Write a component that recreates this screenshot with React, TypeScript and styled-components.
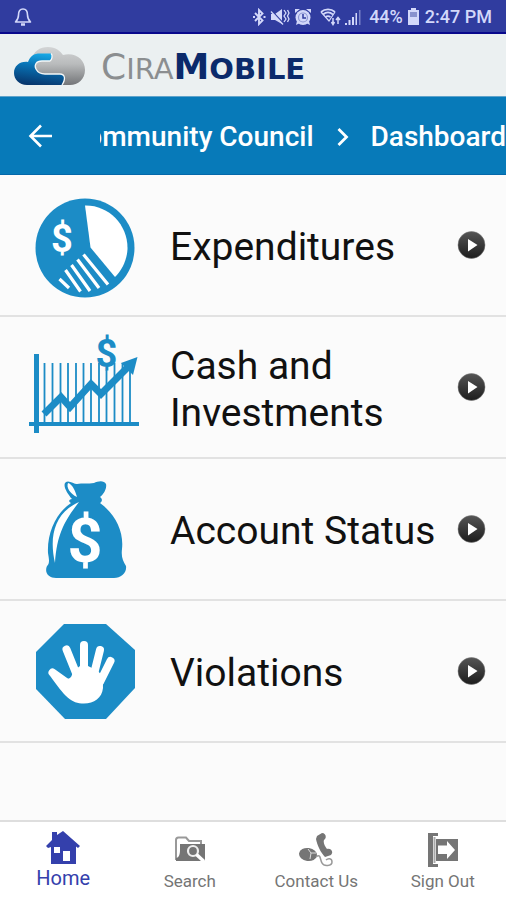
import React from "react";
import styled, { createGlobalStyle } from "styled-components";

const BLUE = "#1c8cc6";
const STATUS = "#d3d8fa";
const GREY = "#757575";

const GlobalStyle = createGlobalStyle`
  *, *::before, *::after { box-sizing: border-box; }
  html, body { margin: 0; padding: 0; }
  body { background: #fafafa; font-family: Roboto, "Liberation Sans", sans-serif; color: #111; }
  svg { display: block; flex: none; }
`;

const Screen = styled.div`
  display: flex;
  flex-direction: column;
  min-height: 100vh;
  overflow: hidden;
  background: #fbfbfb;
`;

const StatusBar = styled.div`
  display: flex;
  align-items: center;
  justify-content: space-between;
  height: 34px;
  padding: 2px 14px 0 14px;
  background: #303c9f;
  border-bottom: 2px solid #08088c;
  color: ${STATUS};
`;

const StatusGroup = styled.div`
  display: flex;
  align-items: center;
  gap: 4px;
  font-size: 18px;
  font-weight: 500;
  line-height: 24px;
  white-space: nowrap;
`;

const BrandBar = styled.header`
  display: flex;
  align-items: center;
  gap: 16px;
  height: 62px;
  padding: 2px 14px 0;
  background: #ebf0f1;
`;

const Wordmark = styled.div`
  padding-top: 4px;
  font-family: "DejaVu Sans", sans-serif;
  font-weight: 400;
  font-size: 36px;
  line-height: 40px;
  color: #8b8e90;
  white-space: nowrap;
`;

const WordmarkStrong = styled.span`
  font-weight: 700;
  color: #0b2a6b;
`;

const SmallCap = styled.span`
  font-size: 29px;
`;

const TitleBar = styled.nav`
  display: flex;
  align-items: center;
  height: 79px;
  border-top: 1px solid #5fa3cb;
  border-bottom: 1px solid #0468aa;
  background: #077ab9;
  color: #fff;
`;

const BackButton = styled.button`
  display: flex;
  align-items: center;
  padding: 0 0 0 28px;
  width: 100px;
  height: 100%;
  flex: none;
  border: 0;
  background: none;
  color: inherit;
  cursor: pointer;
`;

const Crumbs = styled.div`
  display: flex;
  flex: 1;
  min-width: 0;
  align-items: center;
  justify-content: flex-end;
  overflow: hidden;
  padding-top: 2px;
  gap: 22px;
`;

const Crumb = styled.a`
  flex: none;
  color: inherit;
  text-decoration: none;
  font-size: 28px;
  font-weight: 500;
  line-height: 36px;
  white-space: nowrap;
`;

const Menu = styled.main`
  display: flex;
  flex: 1;
  flex-direction: column;
`;

const MenuRow = styled.button`
  display: flex;
  align-items: center;
  min-height: 142px;
  width: 100%;
  padding: 0 19px 0 20px;
  border: 0;
  border-bottom: 2px solid #e2e2e2;
  background: #fbfbfb;
  color: #111;
  font-family: inherit;
  font-size: 39px;
  line-height: 47px;
  text-align: left;
  cursor: pointer;
`;

const RowLabel = styled.span`
  flex: 1;
  min-width: 0;
  padding-left: 20px;
  padding-top: 5px;
`;

const TabBar = styled.nav`
  display: grid;
  grid-template-columns: repeat(4, 1fr);
  height: 80px;
  border-top: 2px solid #dedede;
  background: #fff;
`;

const Tab = styled.a<{ $active?: boolean }>`
  display: flex;
  flex-direction: column;
  align-items: center;
  padding-top: ${(p) => (p.$active ? 9 : 11)}px;
  color: ${(p) => (p.$active ? "#3440ac" : GREY)};
  font-size: ${(p) => (p.$active ? 20 : 17)}px;
  line-height: 24px;
  gap: 2px;
  text-decoration: none;
  white-space: nowrap;
`;

const Bell = () => (
  <svg width="18" height="20" viewBox="0 0 18 20" fill="none" stroke={STATUS} strokeWidth="1.6" strokeLinejoin="round">
    <path d="M1.500 15 C3.500 13 4.500 11 4.500 8 C4.500 4 6 2 9 2 S13.500 4 13.500 8 C13.500 11 14.500 13 16.500 15 Z" />
    <path d="M7 17.500 H11" strokeWidth="2.500" />
  </svg>
);

const Bluetooth = () => (
  <svg width="14" height="18" viewBox="0 0 14 18" fill="none" stroke={STATUS} strokeWidth="1.900">
    <path d="M3 5 L10.500 12.500 L7 16 V2 L10.500 5.500 L3 13" />
    <path d="M1 9 H3 M11.500 9 H13.500" strokeWidth="2" />
  </svg>
);

const Muted = () => (
  <svg width="20" height="18" viewBox="0 0 20 18" fill={STATUS}>
    <path d="M1 6 H5 L12 1 V16 L5 12 H1 Z" />
    <path d="M1 2 L14 16" stroke="#303c9f" strokeWidth="1.500" />
    <path d="M1 3.500 L13 16.500" stroke={STATUS} strokeWidth="1.300" />
    <path d="M14 2 L16 5 L14 8 L16 11 L14 14 M17.500 2 L19 5 L17.500 8 L19 11 L17.500 14" stroke={STATUS} strokeWidth="1.300" fill="none" />
  </svg>
);

const Alarm = () => (
  <svg width="18" height="18" viewBox="0 0 18 18">
    <g fill={STATUS}>
      <circle cx="9" cy="9.500" r="7.500" />
      <path d="M1 5 V1 H6 Z M17 5 V1 H12 Z M2 17 L3 13 L6 15 Z M16 17 L15 13 L12 15 Z" />
    </g>
    <circle cx="9" cy="9.500" r="4.500" fill="none" stroke="#8e97d2" strokeWidth="1.200" />
    <path d="M9 6 V10 H12" fill="none" stroke="#303c9f" strokeWidth="1.500" />
  </svg>
);

const Wifi = () => (
  <svg width="25" height="18" viewBox="-5 0 25 18" fill="none" stroke={STATUS} strokeWidth="1.700">
    <path d="M0 4 C4 0.500 10 0.500 14 4 M2 6.500 C5 4 9 4 12 6.500 M4.500 9 C6 8 8 8 9.500 9" />
    <path d="M0 4 L8 13 L14 4" strokeWidth="1.200" />
    <path d="M12 10 V16 M10.500 14 L12 16.500 L13.500 14 M17 16 V9 M15 12 L17 9.500 L19 12" strokeWidth="1.500" />
  </svg>
);

const Signal = () => (
  <svg width="20" height="18" viewBox="0 0 20 18" fill={STATUS}>
    <path d="M0 15 H2 V17 H0 Z M3.500 12 H5.500 V17 H3.500 Z M7 9 H9 V17 H7 Z M10.500 5 H12 V17 H10.500 Z" />
    <path d="M14 2 H15.500 V17 H14 Z" opacity=".45" />
  </svg>
);

const Battery = () => (
  <svg width="14" height="18" viewBox="0 0 14 18">
    <path d="M4 0 H9 V2 H12 V17 H1 V2 H4 Z" fill={STATUS} />
    <path d="M3 4 H10 V9 H3 Z" fill="#8992ce" />
  </svg>
);

const CloudLogo = () => (
  <svg width="71" height="40" viewBox="0 0 71 40" role="img" aria-label="CiraMobile">
    <defs>
      <linearGradient id="silver" x1="0" y1="0" x2="0" y2="1">
        <stop offset="0" stopColor="#d2d4d5" />
        <stop offset=".45" stopColor="#b9bbbc" />
        <stop offset="1" stopColor="#737578" />
      </linearGradient>
      <linearGradient id="azure" x1=".6" y1="0" x2=".4" y2="1">
        <stop offset="0" stopColor="#18a9e6" />
        <stop offset=".4" stopColor="#0873b5" />
        <stop offset="1" stopColor="#07366d" />
      </linearGradient>
    </defs>
    <path d="M18 14 C19 5 26 1 34 1 C42 1 46 5 49 9 C62 6 71 14 71 24 C71 33 64 39 56 39 H26 C20 32 17 24 18 14 Z" fill="url(#silver)" />
    <path d="M37 7.500 C39 9 38 14 36 15 H28 C22 15 20 19 22 23 C24 27 28 28 31 28 H46 C51 28 52 33 48 39 H13 C5 39 0 33 0 27 C0 20 6 15 14 16 C16 10 20 7.500 26 7.500 Z" fill="url(#azure)" />
    <path d="M37 7.500 C39 9 38 14 36 15 H28 C22 15 20 19 22 23 C24 27 28 28 31 28 H46 C51 28 52 33 48 39" fill="none" stroke="#f4f7f8" strokeWidth="1.300" />
  </svg>
);

const BackArrow = () => (
  <svg width="25" height="24" viewBox="0 0 25 24" fill="none" stroke="#fff" strokeWidth="2.600">
    <path d="M13 1.500 L2.500 12 L13 22.500 M2.500 12 H24" />
  </svg>
);

const Chevron = () => (
  <svg width="13" height="20" viewBox="0 0 13 20" fill="none" stroke="#fff" strokeWidth="2.800">
    <path d="M2.500 2 L10.500 10 L2.500 18" />
  </svg>
);

const Dollar = styled.text`
  font-family: Roboto, sans-serif;
  font-weight: 700;
  text-anchor: middle;
`;

const PieIcon = () => (
  <svg width="130" height="130" viewBox="0 -5 130 130" aria-hidden="true">
    <circle cx="65" cy="63" r="49.500" fill={BLUE} />
    <path d="M65 20.500 C89 20 108 40 107.500 64 C107 75 102 85 95 92 L70.500 62.500 Z" fill="#fff" />
    <path d="M63.500 69.500 L88 99.500 M57.500 74.500 L79 103 M51.500 80 L70 106 M45.500 85 L60.500 106.500 M39.500 94 L49 103" stroke="#fff" strokeWidth="3.200" fill="none" />
    <Dollar x="42" y="67" fontSize="38" fill="#fff">$</Dollar>
  </svg>
);

const ChartIcon = () => (
  <svg width="130" height="130" viewBox="0 -3 130 130" fill="none" stroke={BLUE} aria-hidden="true">
    <path d="M16.500 29 V108" strokeWidth="5" />
    <path d="M9 99 H119" strokeWidth="4" />
    <path d="M24.500 38 V98 M32.500 38 V98 M40.500 38 V98 M48 38 V98 M56 38 V98 M63.500 38 V98 M71 38 V98 M79 38 V98 M86.500 45 V98 M94.500 38 V98 M102.500 38 V98 M110 44 V98" strokeWidth="1.800" />
    <path d="M24 89 L41 72 L50 82 L71 59 L81 69 L110 40" strokeWidth="7" />
    <path d="M117.500 32 L101 38 L113 50 Z" fill={BLUE} stroke="none" />
    <Dollar x="86.500" y="42" fontSize="38" fill={BLUE} stroke="none">$</Dollar>
  </svg>
);

const BagIcon = () => (
  <svg width="130" height="130" viewBox="0 -1 130 130" aria-hidden="true">
    <path d="M52 34 C47 28 42 20 46 17 C49 15 54 19 57 19 C62 18 68 19 74 18 C78 16 84 15 86 19 C87 23 84 29 80 32 C83 34 82 37 80 38 C95 49 104 66 102 84 C101 92 103 96 106 101 C107 108 101 113 94 113 H36 C29 113 24 108 27 101 C30 98 29 94 28 88 C27 68 36 48 51 38 C48 37 49 34 52 34 Z" fill={BLUE} />
    <path d="M48 18 C52 19 55 25 57 32 C50 29 46 22 48 18 Z" fill="#fff" />
    <path d="M59 37 C47 53 37 66 35 98 C29 72 34 48 59 37 Z" fill="#fff" />
    <Dollar x="65" y="97" fontSize="61" fill="#fff">$</Dollar>
  </svg>
);

const HandIcon = () => (
  <svg width="130" height="130" viewBox="0 1 130 130" aria-hidden="true">
    <path d="M44 19 H86 L115 45 V83 L86 114 H45 L16 84 V47 Z" fill={BLUE} />
    <g fill="none" stroke="#fff" strokeLinecap="round" strokeWidth="8">
      <path d="M46.500 44.500 L56 68" />
      <path d="M64 40 V68" />
      <path d="M80 45 L74 69" />
      <path d="M90.500 56 L80 77" />
      <path d="M32.500 67.500 L50 80" />
    </g>
    <path d="M52.500 67 L60 61 H68 L78 66 L84 73 C83 78 83 79 83 83 C82 93 74 98.500 64 98.500 C51 98.500 45 92 29.500 70 L46 74 C51 74 52 71 52.500 67 Z" fill="#fff" />
  </svg>
);

const PlayBadge = () => (
  <svg width="30" height="30" viewBox="0 0 30 30" aria-hidden="true">
    <defs>
      <linearGradient id="badge" x1="0" y1="0" x2="0" y2="1">
        <stop offset="0" stopColor="#555" />
        <stop offset="1" stopColor="#1d1d1d" />
      </linearGradient>
    </defs>
    <circle cx="14.500" cy="15" r="13.500" fill="url(#badge)" stroke="#777" strokeWidth=".5" />
    <path d="M11 9 L20.500 15 L11 21.500 Z" fill="#fff" />
  </svg>
);

const HomeIcon = () => (
  <svg width="34" height="33" viewBox="0 0 34 33" fill="currentColor" aria-hidden="true">
    <path d="M6 1 H11 V4 L17 0 L34 15 L32 17 L30 15.500 V33 H5 V16 L2 17 L0 15 L6 9 Z" />
    <path d="M8 16 H14 V22 H8 Z M17 20 H24 V30 H17 Z" fill="#fff" />
  </svg>
);

const SearchIcon = () => (
  <svg width="32" height="34" viewBox="0 0 32 34" aria-hidden="true">
    <path d="M2 27 V7 C2 5.500 3 4.500 4.500 4.500 H12 L15 8 H27 V11" fill="none" stroke="#999" strokeWidth="2" />
    <path d="M6 11 H31 V28 H2 V25 C5 25 6 21 6 17 Z" fill={GREY} />
    <circle cx="19" cy="18" r="5" fill="none" stroke="#eee" strokeWidth="2.200" />
    <path d="M22.500 21.500 L30 28.500" stroke="#fff" strokeWidth="3.500" />
  </svg>
);

const ContactIcon = () => (
  <svg width="34" height="34" viewBox="0 0 34 34" fill={GREY} aria-hidden="true">
    <ellipse cx="9" cy="21.500" rx="9" ry="6.500" transform="rotate(8 9 21.500)" />
    <path d="M9 16 L12 20 L17 20 M12 20 L11 26" stroke="#ddd" strokeWidth="1" fill="none" />
    <path d="M17 24 C22 20 21 27 23 30 C25 34 33 33 33 29 C33 25 29 25 27 27" fill="none" stroke="#999" strokeWidth="1.500" />
    <path d="M18 3 L23 0 C27 0 28 5 25 7 C24 10 26 13 28 16 C32 15 35 19 32 22 L26 24 C22 20 18 12 17 6 Z" />
  </svg>
);

const SignOutIcon = () => (
  <svg width="32" height="34" viewBox="0 0 32 34" fill={GREY} aria-hidden="true">
    <path d="M1 0 H11 V3 H6 V31 H11 V34 H1 Z" />
    <path d="M7.500 4 V30" stroke="#aaa" strokeWidth="2" />
    <path d="M9 6 H31 V28 H9 Z" />
    <path d="M11 12.500 H20 V8 L28 17 L20 26 V21 H11 Z" fill="#fff" />
  </svg>
);

const items = [
  { label: "Expenditures", Icon: PieIcon },
  { label: "Cash and Investments", Icon: ChartIcon },
  { label: "Account Status", Icon: BagIcon },
  { label: "Violations", Icon: HandIcon },
];

const tabs = [
  { label: "Home", Icon: HomeIcon, active: true },
  { label: "Search", Icon: SearchIcon, active: false },
  { label: "Contact Us", Icon: ContactIcon, active: false },
  { label: "Sign Out", Icon: SignOutIcon, active: false },
];

export default function App() {
  return (
    <Screen>
      <GlobalStyle />
      <StatusBar>
        <Bell />
        <StatusGroup>
          <Bluetooth />
          <Muted />
          <Alarm />
          <Wifi />
          <Signal />
          <span>44%</span>
          <Battery />
          <span>2:47 PM</span>
        </StatusGroup>
      </StatusBar>
      <BrandBar>
        <CloudLogo />
        <Wordmark>
          C<SmallCap>IRA</SmallCap>
          <WordmarkStrong>
            M<SmallCap>OBILE</SmallCap>
          </WordmarkStrong>
        </Wordmark>
      </BrandBar>
      <TitleBar aria-label="Breadcrumb">
        <BackButton type="button" aria-label="Back">
          <BackArrow />
        </BackButton>
        <Crumbs>
          <Crumb href="#council">Community Council</Crumb>
          <Chevron />
          <Crumb href="#dashboard">Dashboard</Crumb>
        </Crumbs>
      </TitleBar>
      <Menu>
        {items.map(({ label, Icon }) => (
          <MenuRow key={label} type="button">
            <Icon />
            <RowLabel>{label}</RowLabel>
            <PlayBadge />
          </MenuRow>
        ))}
      </Menu>
      <TabBar aria-label="Main">
        {tabs.map(({ label, Icon, active }) => (
          <Tab key={label} href="#" $active={active} aria-current={active ? "page" : undefined}>
            <Icon />
            {label}
          </Tab>
        ))}
      </TabBar>
    </Screen>
  );
}
